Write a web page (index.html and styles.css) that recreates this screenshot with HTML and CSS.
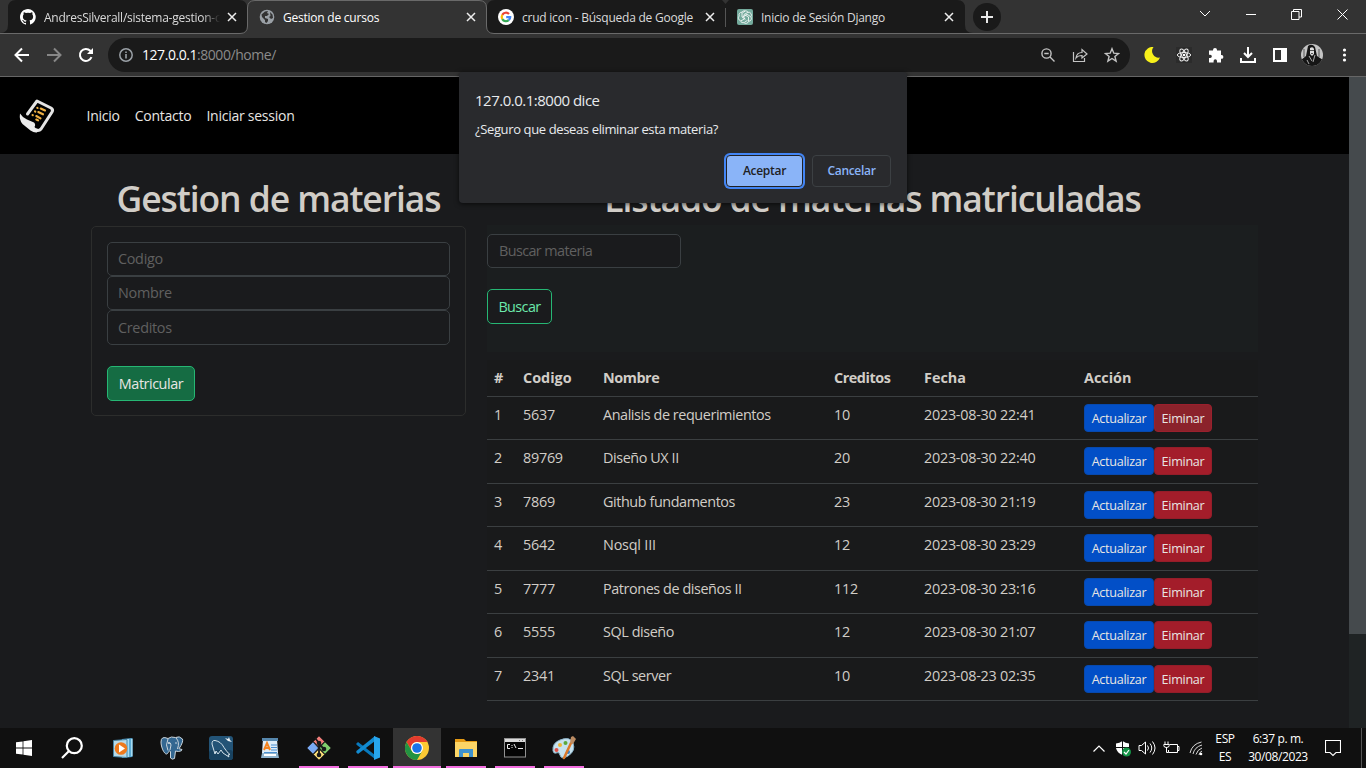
FILE: index.html
```html
<!DOCTYPE html>
<html lang="es">
<head>
<meta charset="utf-8">
<title>Gestion de cursos</title>
<link rel="stylesheet" href="styles.css">
</head>
<body>
<div class="screen">
  <header class="tabs">
    <svg class="tabs-shape" width="1366" height="34" viewBox="0 0 1366 34">
      <path fill="#1a1a1a" d="M0 33Q8 33 8 25V8Q8 0 16 0H239Q247 0 247 8V33ZM487 33V8Q487 0 495 0H957Q965 0 965 8V25Q965 33 973 33Z"/>
      <path fill="#333" stroke="#6a6a6a" d="M0 33.5H240Q247.5 33.5 247.5 26V8Q247.5 .5 255 .5H479Q486.500 .5 486.500 8V26Q486.500 33.5 494 33.5H1366V40H0Z"/>
      <path stroke="#555" d="M725.500 8V27"/>
      <path fill="#333" d="M722 0H729L725.500 4Z"/>
    </svg>
    <div class="tab tab-first">
      <svg width="16" height="16" viewBox="0 0 16 16"><path fill="#fff" d="M8 0C3.580 0 0 3.580 0 8c0 3.540 2.290 6.530 5.470 7.590.4.070.55-.17.55-.38v-1.340C4 14.230 3.480 13.130 3.310 12.660c-.09-.23-.48-.94-.82-1.130-.28-.15-.68-.52-.01-.53.63-.01 1.080.58 1.230.82.720 1.210 1.870.87 2.330.66.070-.52.280-.87.510-1.070-1.780-.2-3.640-.89-3.640-3.950 0-.87.310-1.590.82-2.150-.08-.2-.36-1.020.08-2.120 0 0 .67-.21 2.200.82a7.600 7.600 0 0 1 4 0c1.530-1.040 2.200-.82 2.200-.82.440 1.100.160 1.920.080 2.120.510.560.820 1.270.820 2.150 0 3.070-1.870 3.750-3.650 3.950.290.250.540.730.540 1.480v2.220c0 .210.150.460.550.380A8 8 0 0 0 8 0z"/></svg>
      <span class="tab-title fade">AndresSilverall/sistema-gestion-cursos</span>
      <svg class="x" width="10" height="10"><path d="M1 1l8 8M9 1l-8 8"/></svg>
    </div>
    <div class="tab tab-active">
      <svg width="16" height="16" viewBox="0 0 16 16"><circle cx="8" cy="8" r="7.300" fill="#9aa0a6"/><path fill="#333" d="M2.500 5.500 6 2.500 9 2l-1 2 2 1-2 2H6v2l3 1v2l-1.500 2-1.500-1V11L3 8zM11 3l2.500 2.500L14 9l-2 1-2-2 1.500-1z"/></svg>
      <span class="tab-title">Gestion de cursos</span>
      <svg class="x" width="10" height="10"><path d="M1 1l8 8M9 1l-8 8"/></svg>
    </div>
    <div class="tab">
      <svg width="16" height="16" viewBox="0 0 16 16"><circle cx="8" cy="8" r="8" fill="#fff"/><g fill="none" stroke-width="2.200"><path stroke="#ea4335" d="M4.300 5.900A4.200 4.200 0 0 1 11 5"/><path stroke="#fbbc05" d="M4.300 5.900a4.200 4.200 0 0 0 0 4.200"/><path stroke="#34a853" d="M4.300 10.100A4.200 4.200 0 0 0 10.700 11.200"/><path stroke="#4285f4" d="M10.700 11.200A4.200 4.200 0 0 0 12.200 8.100H8.200"/></g></svg>
      <span class="tab-title">crud icon - Búsqueda de Google</span>
      <svg class="x" width="10" height="10"><path d="M1 1l8 8M9 1l-8 8"/></svg>
    </div>
    <div class="tab">
      <svg width="16" height="16" viewBox="0 0 16 16"><rect width="16" height="16" rx="2" fill="#74aa9c"/><g fill="none" stroke="#fff" stroke-width=".8"><path d="M8 1.800a2.800 2.800 0 0 1 3 1.500 2.800 2.800 0 0 1 2.800 4.500 2.800 2.800 0 0 1-2.200 4.500A2.800 2.800 0 0 1 7 13.700a2.800 2.800 0 0 1-3.500-2A2.800 2.800 0 0 1 2.200 7 2.800 2.800 0 0 1 5 3.200 2.800 2.800 0 0 1 8 1.800z"/><path d="M5 3.500V8l3.500 2.200M8 2.200 5.300 4M11 3.300 7 5.500v4M13.500 7.500 10 5.300 5.500 8M11.500 12V8L8 6M7.500 13.300l3-2M4 11.800l3.800-2"/></g></svg>
      <span class="tab-title">Inicio de Sesión Django</span>
      <svg class="x" width="10" height="10"><path d="M1 1l8 8M9 1l-8 8"/></svg>
    </div>
    <div class="newtab"><svg width="12" height="12"><path stroke="#e8e8e8" stroke-width="2" d="M6 0v12M0 6h12"/></svg></div>
    <div class="winctl">
      <svg width="12" height="8"><path d="M1 1l5 5 5-5"/></svg>
      <svg width="10" height="10"><path d="M0 5.500h10"/></svg>
      <svg width="11" height="11"><path d="M.5 2.500h7.500v8H.5zM2.500 2.500V.5h8v7.500H8"/></svg>
      <svg width="11" height="11"><path d="M.5.5l10 10M10.500.5l-10 10"/></svg>
    </div>
  </header>

  <div class="toolbar">
    <div class="nav-icons">
      <svg width="16" height="16"><path stroke="#fff" d="M15 8H2M8 1.500 1.500 8 8 14.500"/></svg>
      <svg width="16" height="16"><path stroke="#878787" d="M1 8h13M8 1.500 14.500 8 8 14.500"/></svg>
      <svg width="16" height="16"><path stroke="#fff" d="M13.500 10.200A6 6 0 1 1 12.300 3.800L14 5.500"/><path fill="#fff" d="M15 1v6H9z"/></svg>
    </div>
    <div class="omnibox">
      <svg width="14" height="14"><circle cx="7" cy="7" r="6.200" fill="none" stroke="#9aa0a6" stroke-width="1.500"/><path stroke="#9aa0a6" stroke-width="1.600" d="M7 6v4.500M7 3.400V5"/></svg>
      <span class="url"><b>127.0.0.1</b>:8000/home/</span>
      <div class="omni-icons">
        <svg width="16" height="16"><g fill="none" stroke="#c4c4c4" stroke-width="1.400"><circle cx="6.500" cy="6.500" r="4.600"/><path d="M10 10l4.500 4.500M4.300 6.500h4.400"/></g></svg>
        <svg width="16" height="16"><g fill="none" stroke="#c4c4c4" stroke-width="1.200"><path d="M1.500 5v9.500h11V11"/><path d="M4 11c.5-4 2.500-5.500 6-5.500V2.500L15 7l-5 4V8.500c-2.500 0-4.500.5-6 2.500z"/></g></svg>
        <svg width="16" height="16"><path fill="none" stroke="#c4c4c4" stroke-width="1.400" d="M8 1.700l1.800 4.500 4.700.3-3.600 3 1.200 4.600L8 11.500l-4.100 2.600 1.200-4.600-3.600-3 4.700-.3z"/></svg>
      </div>
    </div>
    <div class="ext">
      <svg width="16" height="16"><path fill="#f7f01a" d="M9.500 0A8 8 0 1 0 16 10.500 6.600 6.600 0 0 1 9.500 0z"/></svg>
      <svg width="16" height="16"><rect width="16" height="16" fill="#2b2b2b"/><g fill="none" stroke="#eee"><ellipse cx="8" cy="8" rx="6.700" ry="2.500"/><ellipse cx="8" cy="8" rx="6.700" ry="2.500" transform="rotate(60 8 8)"/><ellipse cx="8" cy="8" rx="6.700" ry="2.500" transform="rotate(120 8 8)"/></g><circle cx="8" cy="8" r="1.300" fill="#fff"/></svg>
      <svg width="16" height="16"><path fill="#fff" d="M1 3.500h4V3a2 2 0 0 1 4 0v.5h4V8h.5a1.900 1.900 0 0 1 0 3.800H13v3.700H9V14a1.700 1.700 0 0 0-3.400 0v1.500H1V11h1.200a1.600 1.600 0 0 0 0-3.300H1z"/></svg>
      <svg width="16" height="16"><path fill="none" stroke="#fff" stroke-width="2" d="M8 0v10M4 6l4 4 4-4M1 11v4h14v-4"/></svg>
      <svg width="16" height="16"><path fill="none" stroke="#fff" stroke-width="2" d="M2 2h12v12H2z"/><path fill="#fff" d="M9 2h5v12H9z"/></svg>
      <svg class="avatar" width="22" height="22"><defs><clipPath id="av"><circle cx="11" cy="11" r="11"/></clipPath></defs><g clip-path="url(#av)"><path fill="#c4c4c4" d="M0 0h22v22H0z"/><path fill="#151515" d="M7 2Q11-1 14 3L16 12 22 16V22H0V16L5 12Z"/><path fill="#ddd" d="M9 4q3-2 4 1v5l-2 2-2-2z"/><path fill="#555" d="M9 6h4v1H9zM10 9h2v1h-2z"/><path stroke="#aaa" d="M8 12l3 5M14 11l-2 7M6 16l2 4"/><path stroke="#555" d="M3 5v8M18 5v8"/></g></svg>
      <svg width="16" height="16"><g fill="#fff"><circle cx="8.500" cy="3" r="1.600"/><circle cx="8.500" cy="8" r="1.600"/><circle cx="8.500" cy="13" r="1.600"/></g></svg>
    </div>
  </div>

  <div class="viewport">
    <div class="page">
      <nav class="navbar">
        <svg class="logo" width="38" height="36" viewBox="0 0 38 36"><path fill="none" stroke="#e4e4e4" stroke-width="3" stroke-linejoin="round" stroke-linecap="round" d="M8.500 16 18 3 32 10Q34.500 11.500 33 14L22 31Q20 33.500 16.500 32"/><path fill="#ececec" d="M1 15.500Q3 19 8 21.500L15 24.500Q17 26.500 15.500 29 16.500 31 19.500 31L18 34.500Q15 35 11.500 32.500L3.500 26Q0 22 1 15.500Z"/><g stroke="#eeb043" stroke-width="2.100" stroke-linecap="round"><path d="M18.300 9.800l.3.200M21.700 10.500l4.300 2M16 13.400l.3.200M19.300 14l4.700 2.300M13.500 17l.3.200M17.300 18l4.200 2.300M17.300 21.500l1.800.9"/></g></svg>
        <a>Inicio</a><a>Contacto</a><a>Iniciar session</a>
      </nav>
      <main class="content">
        <section class="left">
          <h1>Gestion de materias</h1>
          <form class="card">
            <input class="field" placeholder="Codigo">
            <input class="field" placeholder="Nombre">
            <input class="field last" placeholder="Creditos">
            <button type="button" class="btn btn-enroll">Matricular</button>
          </form>
        </section>
        <section class="right">
          <h1>Listado de materias matriculadas</h1>
          <form class="search">
            <input class="field" placeholder="Buscar materia">
            <button type="button" class="btn btn-search">Buscar</button>
          </form>
          <table class="table">
            <colgroup><col class="c1"><col class="c2"><col class="c3"><col class="c4"><col class="c5"><col></colgroup>
            <thead><tr><th>#</th><th>Codigo</th><th class="name">Nombre</th><th class="name">Creditos</th><th>Fecha</th><th>Acción</th></tr></thead>
            <tbody>
              <tr><td>1</td><td>5637</td><td class="name">Analisis de requerimientos</td><td>10</td><td>2023-08-30 22:41</td><td><div class="acts"><a class="upd">Actualizar</a><a class="del pressed">Eiminar</a></div></td></tr>
              <tr><td>2</td><td>89769</td><td class="name">Diseño UX II</td><td>20</td><td>2023-08-30 22:40</td><td><div class="acts"><a class="upd">Actualizar</a><a class="del">Eiminar</a></div></td></tr>
              <tr><td>3</td><td>7869</td><td class="name">Github fundamentos</td><td>23</td><td>2023-08-30 21:19</td><td><div class="acts"><a class="upd">Actualizar</a><a class="del">Eiminar</a></div></td></tr>
              <tr><td>4</td><td>5642</td><td class="name wide">Nosql III</td><td>12</td><td>2023-08-30 23:29</td><td><div class="acts"><a class="upd">Actualizar</a><a class="del">Eiminar</a></div></td></tr>
              <tr><td>5</td><td>7777</td><td class="name">Patrones de diseños II</td><td>112</td><td>2023-08-30 23:16</td><td><div class="acts"><a class="upd">Actualizar</a><a class="del">Eiminar</a></div></td></tr>
              <tr><td>6</td><td>5555</td><td class="name">SQL diseño</td><td>12</td><td>2023-08-30 21:07</td><td><div class="acts"><a class="upd">Actualizar</a><a class="del">Eiminar</a></div></td></tr>
              <tr><td>7</td><td>2341</td><td class="name">SQL server</td><td>10</td><td>2023-08-23 02:35</td><td><div class="acts"><a class="upd">Actualizar</a><a class="del">Eiminar</a></div></td></tr>
            </tbody>
          </table>
        </section>
      </main>
    </div>
    <div class="scrollbar"><div class="thumb"></div></div>
  </div>

  <div class="dialog">
    <div class="dlg-title">127.0.0.1:8000 dice</div>
    <div class="dlg-text">¿Seguro que deseas eliminar esta materia?</div>
    <div class="dlg-actions"><button class="ok">Aceptar</button><button class="cancel">Cancelar</button></div>
  </div>

  <footer class="taskbar">
    <div class="cell"><svg width="16" height="16"><path fill="#fff" d="M0 2.300 6.600 1.400V7.500H0zM7.400 1.300 16 0V7.500H7.400zM0 8.400H6.600V14.600L0 13.700zM7.400 8.400H16V16L7.400 14.700z"/></svg></div>
    <div class="cell"><svg width="22" height="22"><g fill="none" stroke="#fff" stroke-width="2.200"><circle cx="13.300" cy="8.700" r="7.500"/><path d="M8 14l-7 7"/></g></svg></div>
    <div class="cell app first"><svg width="20" height="20"><path fill="#5aa9d3" d="M9 1 19.500 0V19L9 20z"/><path fill="#a6dcf3" d="M14 1h2v18h-2zM18 1h1.500v17H18z"/><path fill="#b8dbe9" stroke="#4787a9" d="M.5 2.500 14 1.500V19.500L.5 18.500z"/><circle cx="8" cy="10.500" r="6.300" fill="#ee7a1d"/><path fill="#fff" d="M6 6.500l6 4-6 4z"/></svg></div>
    <div class="cell app"><svg width="24" height="24"><g fill="#336791" stroke="#cbd5dc"><path d="M8 2.500Q1-.5 1 6c0 5 3 12 5.500 12 1.500 0 2-3 3-3l1 .5V22q1.500 2 4 .5L15.500 15l3 .5q4-.5 3.500-2l-3-.8Q23.500 6 22.500 3 19.500-.5 15.500 1.500 11 0 8 2.500z"/><path fill="none" d="M8 3Q5 9 8 14.500M16 2q4 4 1.500 11M8 7q3-1 3 2l-1 5"/></g><circle cx="9" cy="7" r=".7" fill="#fff"/><circle cx="16" cy="7" r=".7" fill="#fff"/></svg></div>
    <div class="cell app"><svg width="24" height="24"><rect width="24" height="24" rx="3" fill="#235477"/><rect y="14" width="24" height="10" rx="3" fill="#184260"/><path fill="none" stroke="#d3e2eb" d="M6 18 3 8Q3 4 6 4.500q6 1 9 7 3 5 6 7l-2 .5 1 2-6-4-2-3-3 4-2-3z"/><path fill="#f0f5f8" d="M16 2l3 1 1-2 1 3 2 2-4-1z"/></svg></div>
    <div class="cell app"><svg width="18" height="22"><path fill="#deedf8" d="M2 2h14l1 14H1z"/><path fill="#5687ad" d="M1 1h16v3H1z"/><path fill="none" stroke="#f28321" stroke-width="2" d="M3 13 6 6l3 7M4 11h4"/><path stroke="#4b8fd0" d="M10 8h6M10 10.500h6M10 13h6M3 15.500h13"/><path fill="#8eb3cd" d="M1 16h16l1 5H0z"/><path fill="#fff" d="M3 17h12v2H3z"/></svg></div>
    <div class="cell app run"><svg width="24" height="24"><g stroke="#222" stroke-width=".6"><path fill="#f17c79" d="M12 0l5.500 5.500L12 11 6.500 5.500z"/><path fill="#79a9f4" d="M6 6l5.500 6L6 18 0 12z"/><path fill="#80ce6c" d="M18 6l6 6-6 6-5.500-6z"/><path fill="#f9dc77" d="M12 13l5.500 5.500L12 24l-5.500-5.500z"/></g><path fill="none" stroke="#18191a" stroke-width="1.800" d="M8 2l4 5v12M12 8l5 5"/><g fill="#18191a"><circle cx="12" cy="7" r="2.300"/><circle cx="17" cy="13" r="2.300"/><circle cx="12" cy="19" r="2.300"/></g></svg></div>
    <div class="cell app run"><svg width="24" height="24"><path fill="#0879bd" d="M0 8l2-2 17 13v4L1.500 9.500z"/><path fill="#128bd1" d="M0 16l2 2L19 5V0L1 14.500z"/><path fill="#27a6ee" d="M18 0l6 2.500v19L18 24z"/></svg></div>
    <div class="cell app run active"><svg width="24" height="24" viewBox="0 0 24 24"><circle cx="12" cy="12" r="12" fill="#fcc934"/><path fill="#e33b2e" d="M1.600 6A12 12 0 0 1 22.400 6H12a6 6 0 0 0-5.200 9z"/><path fill="#229342" d="M1.600 6A12 12 0 0 0 12 24L17.200 15a6 6 0 0 1-10.400 0z"/><circle cx="12" cy="12" r="6" fill="#fff"/><circle cx="12" cy="12" r="4.800" fill="#1a73e8"/></svg></div>
    <div class="cell app run"><svg width="22" height="20"><path fill="#e59a14" d="M0 1h9l2 2H22V18H0z"/><path fill="#fcd566" d="M0 4h22v15H0z"/><path fill="#3f92ce" d="M4 12q0-1 1-1h13v8h-4v-4H8v4H4z"/></svg></div>
    <div class="cell app run"><svg width="22" height="20"><rect x=".5" y=".5" width="21" height="18.500" fill="#050505" stroke="#929292"/><path fill="#dadada" d="M1 1h20v3H1z"/><path stroke="#777" d="M15 2.500h1M18 2.500h1"/><path fill="none" stroke="#eee" d="M6 6.500H3.500v4H6M8 7v1M8 9v1M10 6l2 4M14 10.500h5"/></svg></div>
    <div class="cell app run"><svg width="24" height="24"><path fill="#c7e2ef" stroke="#8db4c9" d="M1 15Q0 7 8 4q10-4 13 3 3 8-5 13-7 4-8-1-1-4-4-2-2 1-3-2z"/><circle cx="4.500" cy="14" r="2" fill="#df5047"/><circle cx="8" cy="9" r="2" fill="#eeb537"/><circle cx="13.500" cy="7" r="2" fill="#5ba93c"/><circle cx="16" cy="16" r="2" fill="#397ec2"/><path stroke="#dc7829" stroke-width="2.500" stroke-linecap="round" d="M12 22 19 7"/><path fill="#bb8b62" d="M18 7l1-6 2-1 3 3-3 5z"/></svg></div>
    <div class="tray">
      <svg class="chev" width="14" height="24"><path fill="none" stroke="#fff" stroke-width="1.200" d="M1.500 15.500 7 10l5.500 5.500"/></svg>
      <svg class="shield" width="16" height="24"><path fill="#fff" d="M7.500 5Q4.500 7 1 7.500V12q1 5 6.500 7 5.500-3 6.500-7V7.500Q10.500 7 7.500 5z"/><path stroke="#111" d="M1 11.500h13M7.500 5v15"/><circle cx="11.500" cy="16" r="4.500" fill="#149447"/><path fill="none" stroke="#fff" stroke-width="1.200" d="M9 16l2 2 3-4"/></svg>
      <svg class="sound" width="18" height="24"><g fill="none" stroke="#fff"><path d="M1 9.500h2.500L7.500 6v12l-4-3.500H1z"/><path d="M9.500 9.500q2 2.500 0 5M12 7.500q3.500 4.500 0 9M14.500 5.500q5 6.500 0 13"/></g></svg>
      <svg class="power" width="18" height="24"><g fill="none" stroke="#fff"><path d="M6.500 8.500h8v8h-9V14M14.500 10.500h1.500v4h-1.500"/><path d="M2 5.500v2.500M5 5.500v2.500M.8 8.500h5.400v1q0 2-2.700 2t-2.700-2zM3.500 11v5.500h2"/></g></svg>
      <svg class="wifi" width="16" height="24"><g fill="none" stroke="#d8d8d8"><path d="M1 17Q3 8 12.500 6M4 18Q5.500 11 13 9M7 18.500Q8.500 13.500 13 12M10 19q.5-3 3-4"/></g><circle cx="12" cy="18" r="1.300" fill="#fff"/></svg>
      <div class="lang"><span>ESP</span><span>ES</span></div>
      <div class="clock"><span>6:37 p. m.</span><span>30/08/2023</span></div>
      <svg class="notes" width="16" height="24"><path fill="none" stroke="#fff" stroke-width="1.100" d="M.5 4.500h15v12H11L8 19.500 5 16.500H.5z"/></svg>
      <i class="peek"></i>
    </div>
  </footer>
</div>
</body>
</html>
```
FILE: styles.css
```css
* { box-sizing: border-box; }
body { margin: 0; font-family: "Open Sans", "Noto Sans", sans-serif; background: #1a1b1d; }
svg { display: block; flex: none; }
.screen { position: relative; width: 1366px; height: 768px; overflow: hidden; display: flex; flex-direction: column; white-space: nowrap; }

/* Tab strip */
.tabs { position: relative; height: 34px; flex: none; display: flex; background: #333; padding-left: 8px; font-size: 12px; color: #dadada; }
.tabs-shape { position: absolute; left: 0; top: 0; fill: none; }
.tab { position: relative; width: 239px; display: flex; align-items: center; padding: 0 10px 0 12px; }
.tab-active { color: #fff; }
.tab-title { margin-left: 8px; flex: 1; overflow: hidden; letter-spacing: -.23px; }
.tab-first .tab-title { letter-spacing: -.25px; }
.fade { mask-image: linear-gradient(90deg, #000 90%, transparent); margin-right: 7px; }
.x { stroke: #eee; stroke-width: 1.5; }
.newtab { position: relative; width: 28px; height: 28px; margin: 3px 0 0 9px; border-radius: 50%; background: #1a1a1a; display: flex; align-items: center; justify-content: center; }
.winctl { position: relative; margin-left: auto; display: flex; align-items: center; gap: 35px; height: 28px; padding-right: 18px; fill: none; stroke: #fff; }

/* Toolbar */
.toolbar { height: 43px; flex: none; background: #333; border-bottom: 1px solid #666; display: flex; padding-top: 4px; }
.nav-icons { width: 108px; height: 34px; display: flex; align-items: center; gap: 16px; padding-left: 14px; fill: none; stroke-width: 2; }
.omnibox { width: 1022px; height: 34px; border-radius: 17px; background: #1a1a1a; display: flex; align-items: center; padding: 0 10px 0 11px; }
.url { margin: -1px 0 0 9px; color: #8b8b8b; font-size: 14px; letter-spacing: -.45px; }
.url b { color: #fff; font-weight: 400; }
.omni-icons { margin-left: auto; display: flex; gap: 16px; }
.ext { height: 34px; display: flex; align-items: center; gap: 16px; padding-left: 14px; }
.avatar { margin: 0 -3px; }

/* Web page */
.viewport { height: 651px; flex: none; display: flex; background: #1a1b1d; }
.page { width: 1349px; }
.navbar { height: 77px; background: #000; display: flex; align-items: center; gap: 15px; padding-left: 19px; font-size: 14px; letter-spacing: -.25px; color: #e8e6e3; }
.logo { margin-right: 14.5px; }
.content { display: flex; gap: 21px; padding: 20px 0 0 91px; color: #d1cdc7; font-size: 14.4px; }
.left { width: 375px; }
.right { width: 771px; }
h1 { margin: 0; height: 52px; line-height: 49px; font-size: 35.5px; font-weight: 600; color: #d1cdc7; display: flex; justify-content: center; letter-spacing: -1.1px; }
.card { height: 190px; border: 1px solid #2c2d2c; border-radius: 5px; padding: 15px; }
.field { display: block; width: 100%; height: 34.200px; padding: 0 10px 1px; border: 1px solid #3a3f42; border-radius: 5px; background: #1a1b1d; font: inherit; letter-spacing: -.3px; color: #ccc; outline: 0; }
.field::placeholder { color: #606060; opacity: 1; }
.field.last { padding-bottom: 0; }
.btn { height: 35px; border-radius: 5px; border: 1px solid #26b774; font: inherit; padding: 0; text-align: center; display: block; margin-top: 21px; }
.btn-enroll { width: 88px; background: #156c43; color: #e8e6e3; letter-spacing: -.45px; }
.search { height: 127px; margin: -1px 0 0; padding-top: 9px; background: #1b1e1f; }
.search .field { width: 194px; padding-left: 11px; letter-spacing: -.6px; }
.btn-search { width: 65px; background: #1a1b1d; color: #6ce9ac; letter-spacing: -.6px; }
.table { width: 771px; margin-top: 8px; table-layout: fixed; border-collapse: collapse; background: #191a1b; }
.c1 { width: 29px; } .c2 { width: 80px; } .c3 { width: 231px; } .c4 { width: 90px; } .c5 { width: 160px; }
.table th { height: 36.500px; padding: 0 7px 2px; text-align: left; font-weight: 700; border-bottom: 1px solid #3b3f41; }
.table td { height: 43.450px; padding: 7px 7px 0; vertical-align: top; line-height: 22px; border-bottom: 1px solid #3b3f41; letter-spacing: -.26px; }
.table th.name { letter-spacing: -.45px; }
.table td.name { letter-spacing: -.42px; }
.table td.wide { letter-spacing: -.2px; }
.acts { display: flex; height: 28px; }
.acts a { height: 28px; line-height: 27px; text-align: center; border-radius: 4px; font-size: 12.600px; letter-spacing: -.3px; color: #e8e6e3; }
.upd { width: 70px; background: #024fc7; border: 1px solid #0749ae; }
.del { width: 58px; background: #a31d2a; border: 1px solid #941d29; }
.del.pressed { background: #8b222b; border-color: #9a202d; }
.scrollbar { width: 17px; background: #1f2324; }
.thumb { height: 557px; background: #454a4d; }

/* Confirmation dialog */
.dialog { position: absolute; left: 459px; top: 72px; width: 448px; height: 131px; padding: 17px 16px 18px; background: #292a2d; border-radius: 4px; box-shadow: 0 1px 5px #000a; color: #e8eaed; }
.dlg-title { height: 22px; line-height: 22px; font-size: 15px; letter-spacing: -.5px; }
.dlg-text { height: 20px; margin-top: 8px; line-height: 20px; font-size: 13px; letter-spacing: -.37px; }
.dlg-actions { display: flex; justify-content: flex-end; gap: 9px; margin-top: 16px; }
.dlg-actions button { height: 32px; border-radius: 4px; font: 600 12px "Open Sans", "Noto Sans", sans-serif; letter-spacing: -.3px; padding: 0 0 1px; }
.ok { width: 77px; background: #8ab4f8; border: 1px solid #202124; color: #202124; box-shadow: 0 0 0 2px #4285f4; }
.cancel { width: 79px; background: none; border: 1px solid #3c4043; color: #8ab4f8; }

/* Taskbar */
.taskbar { height: 40px; flex: none; display: flex; background: #101010; color: #fff; }
.cell { width: 48px; height: 40px; display: flex; align-items: center; justify-content: center; position: relative; }
.app { margin-right: 1px; }
.first { margin-left: 3px; }
.run::after { content: ""; position: absolute; left: 4px; right: 4px; bottom: 0; height: 2px; background: #f36ee0; }
.active { background: #333; }
.active::after { left: 0; right: 0; }
.tray { margin-left: auto; display: flex; align-items: center; font-size: 12px; }
.chev { margin-right: 9px; }
.shield, .sound { margin-right: 7px; }
.power, .notes { margin-right: 8px; }
.wifi { margin-right: 6px; }
.lang, .clock { display: flex; flex-direction: column; align-items: center; line-height: 18px; letter-spacing: -.4px; }
.lang { width: 28px; }
.clock { width: 76px; margin: 0 9px 0 1px; }
.peek { width: 1px; height: 40px; margin-left: 12px; margin-right: 4px; background: #555; }
```
